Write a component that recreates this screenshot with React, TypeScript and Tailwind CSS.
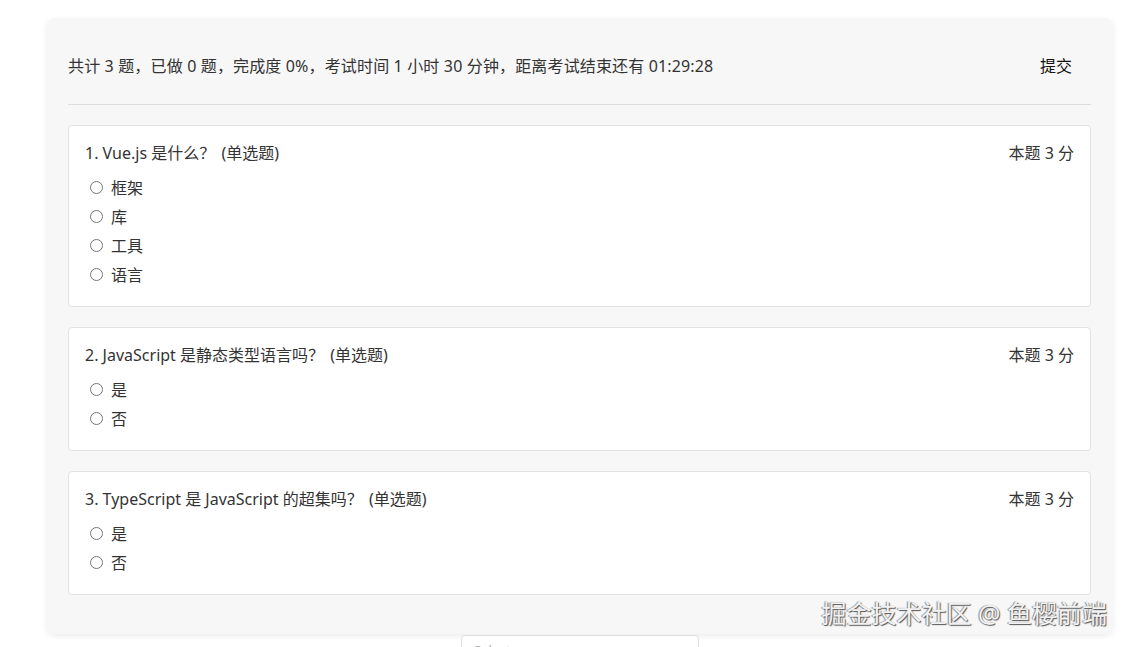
type Question = {
  id: number;
  title: string;
  score: number;
  options: string[];
};

const questions: Question[] = [
  { id: 1, title: "Vue.js 是什么？", score: 3, options: ["框架", "库", "工具", "语言"] },
  { id: 2, title: "JavaScript 是静态类型语言吗？", score: 3, options: ["是", "否"] },
  { id: 3, title: "TypeScript 是 JavaScript 的超集吗？", score: 3, options: ["是", "否"] },
];

function QuestionCard({ q }: { q: Question }) {
  return (
    <div className="rounded-[4px] border border-[#e3e3e3] bg-white px-4 pt-[14px] pb-[17px]">
      <div className="flex items-center justify-between leading-[26px]">
        <p>
          {q.id}. {q.title} <span className="ml-0.5">(单选题)</span>
        </p>
        <p>本题 {q.score} 分</p>
      </div>
      <div className="mt-[7px] flex flex-col">
        {q.options.map((opt) => (
          <label key={opt} className="flex h-[29px] items-center gap-[8px] pl-[5px]">
            <span className="h-[13px] w-[13px] rounded-full border border-[#767676] bg-white" />
            <span>{opt}</span>
          </label>
        ))}
      </div>
    </div>
  );
}

export default function App() {
  return (
    <div
      className="relative h-[647px] overflow-hidden bg-white text-[16px] text-[#333]"
      style={{ fontFamily: '"Noto Sans", "Noto Sans CJK SC", sans-serif' }}
    >
      <div className="pt-[18px] pl-[47px] pr-[13px]">
        <div className="rounded-[8px] bg-[#f7f7f7] pl-[21px] pr-[22px] pt-[30px] pb-[39px] shadow-[0_2px_6px_rgba(0,0,0,0.08)]">
          <div className="flex h-[36px] items-center justify-between">
            <p className="tracking-[0.15px]">
              共计 3 题，已做 0 题，完成度 0%，考试时间 1 小时 30 分钟，距离考试结束还有 01:29:28
            </p>
            <button className="mr-[4px] h-[36px] rounded-[4px] bg-[#f7f7f7] px-[15px] text-[#111]">提交</button>
          </div>
          <div className="mt-[20px] border-t border-[#dddddd]" />
          <div className="mt-[20px] flex flex-col gap-[20px]">
            {questions.map((q) => (
              <QuestionCard key={q.id} q={q} />
            ))}
          </div>
        </div>
      </div>
      <div className="ml-[461px] mt-[1px] h-[40px] w-[238px] rounded-t-[4px] border border-[#e0e0e0] bg-white px-3 pt-[6px] text-[13px] leading-[16px] text-[#aaa]">
        Select...
      </div>
      <div
        className="absolute right-[19px] top-[597px] text-[25px] leading-[32px] text-[#f2f2f2]"
        style={{ textShadow: "1px 1px 1px #555, -1px 0 1px #888" }}
      >
        掘金技术社区 @ 鱼樱前端
      </div>
    </div>
  );
}
